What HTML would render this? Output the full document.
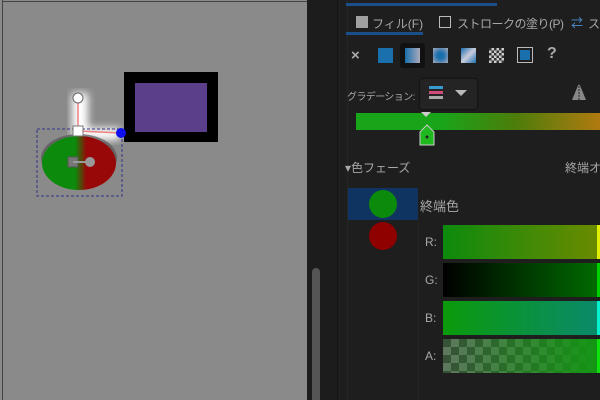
<!DOCTYPE html>
<html><head><meta charset="utf-8"><style>
*{margin:0;padding:0;box-sizing:border-box}
body{width:600px;height:400px;overflow:hidden;background:#1e1e1e;position:relative;font-family:"Liberation Sans","Noto Sans CJK JP",sans-serif;color:#a8a8a8;font-size:12px}
.a{position:absolute;white-space:nowrap}
</style></head><body>
<div class="a" style="left:0;top:0;width:307px;height:400px;background:#8a8a8a"></div>
<div class="a" style="left:2px;top:0;width:1px;height:400px;background:#444"></div>
<div class="a" style="left:2px;top:1px;width:305px;height:1px;background:#444"></div>
<div class="a" style="left:307px;top:0;width:30px;height:400px;background:#1c1c1c"></div>
<div class="a" style="left:312px;top:268px;width:8px;height:132px;background:#555;border-radius:4px 4px 0 0"></div>
<div class="a" style="left:337px;top:0;width:1px;height:400px;background:#141414"></div>
<div class="a" style="left:347px;top:0;width:1px;height:400px;background:#252525"></div>

<svg class="a" style="left:0;top:0" width="307" height="400">
<defs>
<linearGradient id="rg" x1="0" x2="1"><stop offset="0.45" stop-color="#0b8a0b"/><stop offset="0.6" stop-color="#980808"/></linearGradient>
<filter id="bl"><feGaussianBlur stdDeviation="4"/></filter>
</defs>
<path d="M72 93 H88 V128 H120 V140 H72 Z" fill="#fff" filter="url(#bl)"/>
<ellipse cx="79" cy="158" rx="38" ry="24" fill="#555" opacity=".7"/>
<ellipse cx="79" cy="163" rx="37" ry="27" fill="url(#rg)"/>
<rect x="37" y="129" width="85" height="67" fill="none" stroke="#33338a" stroke-dasharray="3,2"/>
<rect x="124" y="72" width="94" height="70" fill="#000"/>
<rect x="135" y="83" width="72" height="49" fill="#5b3f8a"/>
<line x1="78" y1="98" x2="78" y2="131" stroke="#f08080" stroke-width="1.5"/>
<line x1="78" y1="131" x2="121" y2="133" stroke="#f08080" stroke-width="1.5"/>
<circle cx="78" cy="98" r="5" fill="#fff" stroke="#666"/>
<rect x="73" y="126" width="10" height="10" fill="#fff" stroke="#777"/>
<circle cx="121" cy="133" r="5" fill="#1010ee"/>
<rect x="68" y="157" width="10" height="10" fill="#777" stroke="#555"/>
<line x1="73" y1="162" x2="90" y2="162" stroke="#999" stroke-width="2"/>
<circle cx="90" cy="162" r="5" fill="#999"/>
</svg>

<div class="a" style="left:346px;top:3px;width:151px;height:3px;background:#1b4f8a"></div>
<div class="a" style="left:356px;top:16px;width:12px;height:12px;background:#a0a0a0"></div>
<div class="a" style="left:372px;top:15px;font-size:12px">フィル(F)</div>
<div class="a" style="left:346px;top:32px;width:77px;height:3px;background:#1b4f8a"></div>
<div class="a" style="left:439px;top:16px;width:12px;height:12px;border:1.5px solid #bbb"></div>
<div class="a" style="left:457px;top:15px;font-size:12px;letter-spacing:-0.5px">ストロークの塗り(P)</div>
<div class="a" style="left:571px;top:14px;font-size:12px;color:#4a90d0">⇄</div>
<div class="a" style="left:588px;top:15px;font-size:12px">ス</div>

<div class="a" style="left:351px;top:47px;font-size:15px;font-weight:bold;color:#aaa">×</div>
<div class="a" style="left:378px;top:48px;width:15px;height:15px;background:#1a6fad"></div>
<div class="a" style="left:400px;top:43px;width:25px;height:25px;background:#111;border-radius:3px"></div>
<div class="a" style="left:405px;top:48px;width:15px;height:15px;background:linear-gradient(90deg,#1a6fad,#aab)"></div>
<div class="a" style="left:433px;top:48px;width:15px;height:15px;background:radial-gradient(#1a6fad 30%,#aab)"></div>
<div class="a" style="left:461px;top:48px;width:15px;height:15px;background:linear-gradient(135deg,#1a6fad,#ccd 50%,#1a6fad)"></div>
<div class="a" style="left:489px;top:48px;width:15px;height:15px;background:repeating-conic-gradient(#ccc 0 25%,#333 0 50%) 0 0/5px 5px"></div>
<div class="a" style="left:517px;top:47px;width:16px;height:16px;border:1.5px solid #bbb;padding:2px"><div style="width:100%;height:100%;background:#1a6fad"></div></div>
<div class="a" style="left:547px;top:45px;font-size:16px;font-weight:bold;color:#aaa">?</div>

<div class="a" style="left:347px;top:88px;font-size:10px;letter-spacing:-0.6px">グラデーション:</div>
<div class="a" style="left:420px;top:79px;width:57px;height:30px;background:#242424;border-radius:3px;box-shadow:0 0 2px #000"></div>
<div class="a" style="left:429px;top:86px;width:14px;height:3px;background:#3a9ad0"></div>
<div class="a" style="left:429px;top:91px;width:14px;height:3px;background:#d04a7a"></div>
<div class="a" style="left:429px;top:96px;width:14px;height:3px;background:#aaa"></div>
<div class="a" style="left:455px;top:90px;border:6px solid transparent;border-top:6px solid #bbb"></div>
<svg class="a" style="left:571px;top:82px" width="16" height="20"><path d="M8 1 L1 18 H15 Z" fill="#888"/><line x1="8" y1="1" x2="8" y2="19" stroke="#222" stroke-dasharray="2,1"/></svg>

<div class="a" style="left:356px;top:113px;width:244px;height:17px;background:linear-gradient(90deg,#19a519 0%,#19a519 35%,#4c7d0a 65%,#b07a10 100%)"></div>
<div class="a" style="left:421px;top:112px;border:5px solid transparent;border-top:5px solid #ccc"></div>
<svg class="a" style="left:419px;top:124px" width="16" height="22"><path d="M8 1 L15 8 V21 H1 V8 Z" fill="#1fb81f" stroke="#ccc"/><circle cx="8" cy="13" r="1.5" fill="#222"/></svg>

<div class="a" style="left:345px;top:159px;font-size:12px">▾色フェーズ</div>
<div class="a" style="left:565px;top:159px;font-size:12px">終端オ</div>
<div class="a" style="left:348px;top:188px;width:70px;height:32px;background:#0f3462"></div>
<div class="a" style="left:418px;top:220px;width:1px;height:180px;background:#252525"></div>
<div class="a" style="left:369px;top:190px;width:28px;height:28px;border-radius:50%;background:#0b8a0b"></div>
<div class="a" style="left:369px;top:222px;width:28px;height:28px;border-radius:50%;background:#8f0000"></div>
<div class="a" style="left:420px;top:196px;font-size:13px">終端色</div>

<div class="a" style="left:425px;top:235px">R:</div>
<div class="a" style="left:425px;top:273px">G:</div>
<div class="a" style="left:425px;top:311px">B:</div>
<div class="a" style="left:425px;top:349px">A:</div>
<div class="a" style="left:443px;top:225px;width:154px;height:34px;background:linear-gradient(90deg,#0d8a0d,#6a8a00)"></div>
<div class="a" style="left:443px;top:263px;width:154px;height:34px;background:linear-gradient(90deg,#000,#006a00)"></div>
<div class="a" style="left:443px;top:301px;width:154px;height:34px;background:linear-gradient(90deg,#0b9a0b,#0a8a6a)"></div>
<div class="a" style="left:443px;top:339px;width:154px;height:34px;background:linear-gradient(90deg,rgba(20,120,20,.25),rgba(20,150,20,1)),repeating-conic-gradient(#777 0 25%,#444 0 50%) 0 0/16px 16px"></div>
<div class="a" style="left:597px;top:225px;width:3px;height:34px;background:#e0f000"></div>
<div class="a" style="left:597px;top:263px;width:3px;height:34px;background:#00d000"></div>
<div class="a" style="left:597px;top:301px;width:3px;height:34px;background:#00f0d0"></div>
<div class="a" style="left:597px;top:339px;width:3px;height:34px;background:#10e010"></div>
</body></html>
